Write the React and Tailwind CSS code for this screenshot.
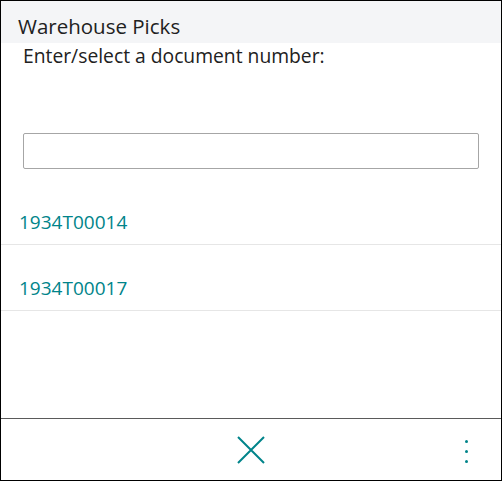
const docs = ["1934T00014", "1934T00017"];

export default function App() {
  return (
    <div
      className="w-[502px] h-[481px] border border-black bg-white flex flex-col text-[#212121]"
      style={{ fontFamily: '"Open Sans", "Noto Sans", sans-serif' }}
    >
      <div className="h-[42px] bg-[#f4f5f7] flex items-center pl-[17px] pt-[9px] shrink-0">
        <span className="text-[20.5px] leading-none">Warehouse Picks</span>
      </div>
      <div className="pl-[22px] pr-[22px] pt-[1px]">
        <p className="text-[19.3px] leading-[24px]">Enter/select a document number:</p>
        <input
          type="text"
          className="mt-[65px] w-full h-[36px] border border-[#a6a6a6] rounded-[2px] outline-none px-2"
        />
      </div>
      <div className="mt-[10px]">
        {docs.map((d) => (
          <div
            key={d}
            className="h-[66px] flex items-end pb-[12px] pl-[18px] border-b border-[#e6e6e6] text-[19px] leading-[20px] text-[#00848a]"
          >
            {d}
          </div>
        ))}
      </div>
      <div className="flex-1" />
      <div className="h-[62px] border-t border-[#5a5a5a] flex items-center shrink-0 relative">
        <div className="flex-1 flex justify-center">
          <svg width="28" height="28" viewBox="0 0 28 28" fill="none" stroke="#00848a" strokeWidth="2">
            <path d="M1 1 L27 27 M27 1 L1 27" />
          </svg>
        </div>
        <div className="absolute right-[33px] top-[21px] flex flex-col gap-[7px]">
          <span className="w-[3px] h-[3px] rounded-full bg-[#00848a]" />
          <span className="w-[3px] h-[3px] rounded-full bg-[#00848a]" />
          <span className="w-[3px] h-[3px] rounded-full bg-[#00848a]" />
        </div>
      </div>
    </div>
  );
}
